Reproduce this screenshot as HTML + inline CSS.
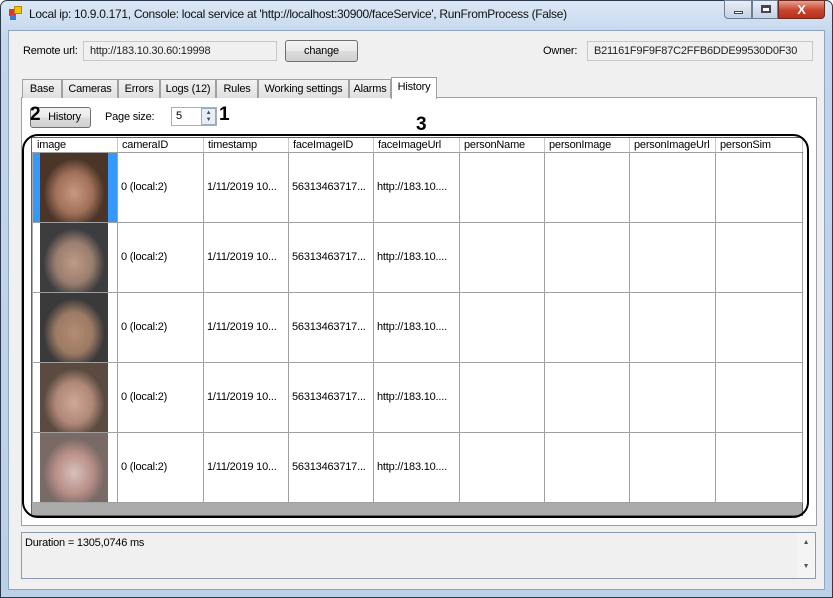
<!DOCTYPE html>
<html><head><meta charset="utf-8"><style>
*{box-sizing:border-box;margin:0;padding:0}
body{width:833px;height:598px;overflow:hidden;background:#fff;font-family:"Liberation Sans",sans-serif;font-size:11px;letter-spacing:-0.2px;color:#000;position:relative}
.abs{position:absolute}
.win{left:0;top:0;width:833px;height:598px;border:1px solid #2a3a4d;border-radius:7px 7px 0 0;background:linear-gradient(#dbe7f5,#c2d5ec 40px,#bcd0e8);}
.client{left:8px;top:30px;width:817px;height:560px;background:#f0f0f0;border:1px solid #8ea6c2}
.tb{background:#f0f0f0;border:1px solid #c8c8c8;height:20px;line-height:18px;padding-left:6px;color:#222}
.btn{border:1px solid #707070;border-radius:3px;background:linear-gradient(#f2f2f2,#ebebeb 50%,#dddddd 50%,#cfcfcf);text-align:center}
.tab{top:79px;height:19px;border:1px solid #a0a0a0;border-bottom:none;background:linear-gradient(#f2f2f2,#e0e0e0);line-height:18px;text-align:center}
.cell{position:absolute;border-right:1px solid #a0a0a0;border-bottom:1px solid #a0a0a0;background:#fff}
.face{position:absolute;left:7px;top:0;width:68px;height:69px}
</style></head><body>
<div class="abs win"></div>
<div class="abs" style="left:9px;top:9px;width:7px;height:7px;background:#d33"></div>
<div class="abs" style="left:14px;top:6px;width:8px;height:8px;background:#f4c400;border:1px solid #b08a00"></div>
<div class="abs" style="left:10px;top:15px;width:6px;height:5px;background:#3a7ad8"></div>
<div class="abs" style="left:29px;top:7px;font-size:12px;letter-spacing:-0.3px;color:#111">Local ip: 10.9.0.171, Console: local service at 'http://localhost:30900/faceService', RunFromProcess (False)</div>
<div class="abs" style="left:724px;top:0;width:28px;height:19px;border:1px solid #6d7f96;border-radius:0 0 0 4px;background:linear-gradient(#e8eef6,#c4d2e4)"><div class="abs" style="left:9px;top:10px;width:9px;height:3px;background:#fff;border:1px solid #445"></div></div>
<div class="abs" style="left:752px;top:0;width:26px;height:19px;border:1px solid #6d7f96;background:linear-gradient(#e8eef6,#c4d2e4)"><div class="abs" style="left:8px;top:4px;width:10px;height:8px;border:2px solid #445;border-top-width:3px;background:#fff"></div></div>
<div class="abs" style="left:778px;top:0;width:47px;height:19px;border:1px solid #6b2a20;border-radius:0 0 4px 0;background:linear-gradient(#e8a090,#c8432c 55%,#b83020);color:#fff;font-weight:bold;font-size:13px;text-align:center;line-height:17px">X</div>
<div class="abs client"></div>
<div class="abs" style="left:23px;top:45px">Remote url:</div>
<div class="abs tb" style="left:83px;top:41px;width:194px">http://183.10.30.60:19998</div>
<div class="abs btn" style="left:285px;top:40px;width:73px;height:22px;line-height:20px">change</div>
<div class="abs" style="left:543px;top:45px">Owner:</div>
<div class="abs tb" style="left:587px;top:41px;width:226px">B21161F9F9F87C2FFB6DDE99530D0F30</div>
<div class="abs" style="left:21px;top:97px;width:796px;height:429px;background:#fff;border:1px solid #a0a0a0"></div>
<div class="abs tab" style="left:22px;width:40px">Base</div>
<div class="abs tab" style="left:62px;width:56px">Cameras</div>
<div class="abs tab" style="left:118px;width:42px">Errors</div>
<div class="abs tab" style="left:160px;width:56px">Logs (12)</div>
<div class="abs tab" style="left:216px;width:42px">Rules</div>
<div class="abs tab" style="left:258px;width:91px">Working settings</div>
<div class="abs tab" style="left:349px;width:42px">Alarms</div>
<div class="abs tab" style="left:391px;top:77px;width:46px;height:22px;background:#fff;line-height:19px">History</div>
<div class="abs btn" style="left:30px;top:107px;width:61px;height:21px;line-height:19px;padding-left:8px">History</div>
<div class="abs" style="left:30px;top:104px;font-size:19px;font-weight:bold">2</div>
<div class="abs" style="left:105px;top:111px">Page size:</div>
<div class="abs" style="left:171px;top:107px;width:46px;height:19px;border:1px solid #abadb3;background:#fff;padding:2px 4px">5</div>
<div class="abs" style="left:201px;top:108px;width:15px;height:17px;background:#e8eef5;border:1px solid #9ab;font-size:6px;color:#446;text-align:center;line-height:7px;padding-top:1px">▲<br>▼</div>
<div class="abs" style="left:219px;top:104px;font-size:19px;font-weight:bold">1</div>
<div class="abs" style="left:416px;top:114px;font-size:19px;font-weight:bold">3</div>
<div class="abs" style="left:31px;top:137px;width:772px;height:379px;background:#ababab;border:1px solid #646464"></div>
<div class="abs" style="left:32px;top:138px;width:770px;height:15px;background:#fff;border-bottom:1px solid #a0a0a0"></div>
<div id="g"></div>
<div class="abs" style="left:22px;top:134px;width:787px;height:384px;border:2px solid #000;border-radius:16px"></div>
<div class="abs" style="left:21px;top:532px;width:795px;height:47px;border:1px solid #8a9bb0;background:#f0f0f0;padding:4px 3px">Duration = 1305,0746 ms</div>
<div class="abs" style="left:797px;top:533px;width:18px;height:45px;background:#f4f4f4;color:#555;font-size:7px;text-align:center;line-height:8px;padding-top:6px">▲<br><br><br>▼</div>
<script>
var cols=[[33,117,"image"],[118,203,"cameraID"],[204,288,"timestamp"],[289,373,"faceImageID"],[374,459,"faceImageUrl"],[460,544,"personName"],[545,629,"personImage"],[630,715,"personImageUrl"],[716,802,"personSim"]];
var h="";
cols.forEach(function(c){h+='<div class="abs" style="left:'+(c[0]+4)+'px;top:139px">'+c[2]+'</div><div class="abs" style="left:'+c[1]+'px;top:138px;width:1px;height:14px;background:#c8c8c8"></div>';});
var faces=[["#4a3528","#a07058","#c79a80"],["#3d3d40","#9a7e6e","#c09a88"],["#3a3a3a","#9c7a64","#b48c74"],["#5a4a40","#b08878","#d0a898"],["#7a6a66","#b89088","#d8c0bc"]];
for(var r=0;r<5;r++){var y=153+r*70;
cols.forEach(function(c,i){var bg=(r==0&&i==0)?"#3399ff":"#fff";
h+='<div class="cell" style="left:'+c[0]+'px;top:'+y+'px;width:'+(c[1]-c[0]+1)+'px;height:70px;background:'+bg+'">';
if(i==0){var f=faces[r];h+='<div class="face" style="background:radial-gradient(ellipse 45% 50% at 50% 58%,'+f[2]+','+f[1]+' 60%,'+f[0]+')"></div>';}
var t=["","0 (local:2)","1/11/2019 10...","56313463717...","http://183.10...."][i];
if(t)h+='<div class="abs" style="left:3px;top:28px;white-space:nowrap">'+t+'</div>';
h+='</div>';});}
document.getElementById("g").innerHTML=h;
</script>
</body></html>
